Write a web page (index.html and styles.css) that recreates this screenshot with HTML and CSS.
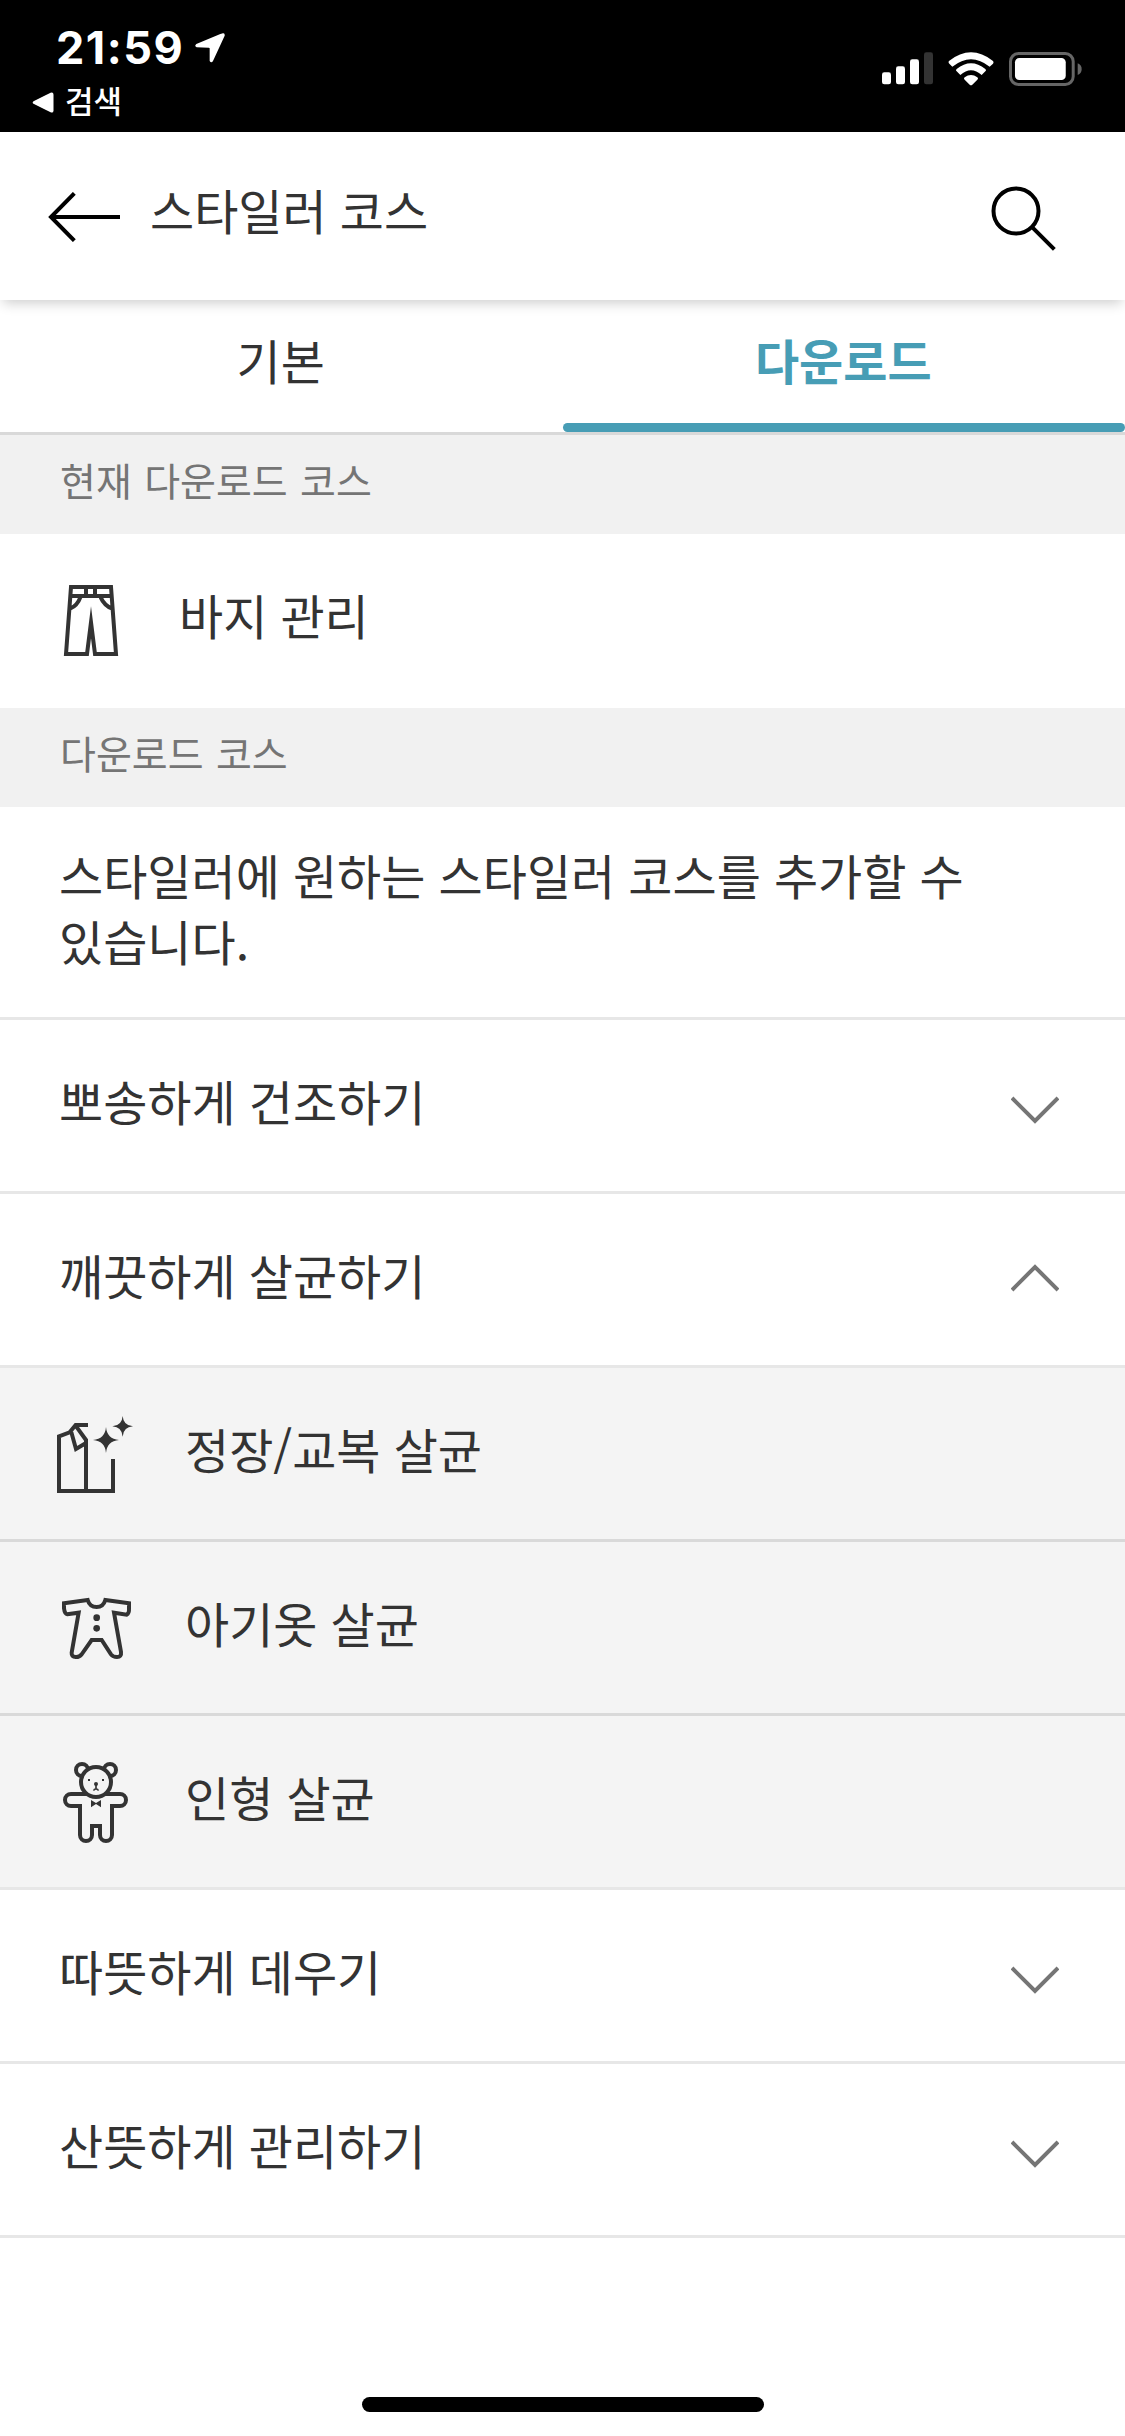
FILE: index.html
```html
<!DOCTYPE html>
<html lang="ko">
<head>
<meta charset="utf-8">
<title>스타일러 코스</title>
<link rel="stylesheet" href="styles.css">
</head>
<body>
<header class="status">
  <div class="status-left">
    <div class="clock"><span class="time">21:59</span>
      <svg class="location" viewBox="0 0 90 90"><path d="M84 1Q90 0 89 8L54 84Q49 92 44 84V46Q44 44 41 44L5 43Q-3 39 4 33L76 3Z"/></svg>
    </div>
    <div class="back-app">
      <svg class="back-mark" viewBox="0 0 66 64"><path d="M56 2Q65-1 65 8V56Q65 65 56 62L4 36Q-1 32 4 28Z"/></svg>
      <span>검색</span>
    </div>
  </div>
  <div class="status-right">
    <svg class="signal" viewBox="0 0 153 99"><rect y="61" width="27" height="36" rx="7"/><rect x="42" y="43" width="27" height="54" rx="7"/><rect x="84" y="22" width="27" height="75" rx="7"/><rect class="dim" x="126" y="1" width="27" height="96" rx="7"/></svg>
    <svg class="wifi" viewBox="0 0 138 102"><path d="M3 27Q0 31 4 35L13 44Q69-1 125 44L135 35Q138 31 135 27Q69-25 3 27ZM26 51Q22 55 26 58L37 69Q69 40 101 69L112 58Q116 55 112 51Q69 16 26 51ZM50 76Q46 80 50 83L65 98Q69 102 73 98L88 83Q92 80 88 76Q69 62 50 76Z"/></svg>
    <svg class="battery" viewBox="0 0 220 102"><rect class="shell" x="4.500" y="4.500" width="189" height="93" rx="24"/><rect x="18" y="18" width="153" height="66" rx="13"/><path class="cap" d="M207 34Q219 39 219 51Q219 64 207 69Z"/></svg>
  </div>
</header>

<nav class="topbar">
  <svg class="arrow" viewBox="0 0 216 150"><path d="M79 4L9 75L79 146M9 75H216"/></svg>
  <h1 class="title">스타일러 코스</h1>
  <svg class="search" viewBox="0 0 195 195"><circle cx="75" cy="75" r="67.500"/><path d="M124 124L190 190"/></svg>
</nav>

<div class="tabs">
  <div class="tab">기본</div>
  <div class="tab active">다운로드</div>
</div>

<main>
  <h2 class="section">현재 다운로드 코스</h2>
  <div class="row current">
    <svg class="icon pants" viewBox="0 0 180 222"><path d="M33 9H153L168 210H105L93 115L81 210H18ZM31 36H155M78 9V36M105 9V36M61 40Q52 65 30 74M122 40Q133 65 157 74"/></svg>
    <span>바지 관리</span>
  </div>
  <h2 class="section second">다운로드 코스</h2>
  <p class="intro">스타일러에 원하는 스타일러 코스를 추가할 수 있습니다.</p>

  <div class="row group"><span>뽀송하게 건조하기</span>
    <svg class="chevron" viewBox="0 0 144 84"><path d="M3 6L72 75L141 6"/></svg></div>
  <div class="row group"><span>깨끗하게 살균하기</span>
    <svg class="chevron up" viewBox="0 0 144 84"><path d="M3 78L72 9L141 78"/></svg></div>
  <div class="row item">
    <svg class="icon jacket" viewBox="0 0 234 240"><path d="M96 33H59L41 55L9 67V231H171V135M90 231V78L61 38M90 87L60 105L46 55"/><path class="solid" d="M150 39Q153 75 189 78Q153 81 150 117Q147 81 111 78Q147 75 150 39ZM200 6Q202 35 231 37Q202 39 200 68Q198 39 169 37Q198 35 200 6Z"/></svg>
    <span>정장/교복 살균</span>
  </div>
  <div class="row item">
    <svg class="icon baby" viewBox="0 0 234 195"><path d="M95 12L24 22V37Q26 54 34 55L68 50L47 170Q46 183 59 183Q69 184 77 175L107 132H137L165 175Q171 183 183 183Q197 183 195 168L174 50L212 56Q220 52 219 37V22L148 12Q142 33 122 33Q101 33 95 12Z"/><circle class="solid" cx="122" cy="65" r="10"/><circle class="solid" cx="122" cy="97" r="10"/></svg>
    <span>아기옷 살균</span>
  </div>
  <div class="row item last">
    <svg class="icon bear" viewBox="0 0 234 255"><circle cx="78" cy="30" r="18"/><circle cx="162" cy="30" r="18"/><path d="M100 102H45a18 18 0 0 0 0 36H72V225a18 18 0 0 0 36 0V198H132V225a18 18 0 0 0 36 0V138H192a18 18 0 0 0 0-36H140"/><circle class="face" cx="120" cy="66" r="45"/><path class="solid" d="M96 57h6v6h-6zM138 57h6v6h-6zM105 120L120 129L135 120V142L120 132L105 142Z"/><circle class="solid" cx="120" cy="72" r="6"/><path class="mouth" d="M120 72V87M113 92Q114 87 120 87Q126 87 127 92"/></svg>
    <span>인형 살균</span>
  </div>
  <div class="row group"><span>따뜻하게 데우기</span>
    <svg class="chevron" viewBox="0 0 144 84"><path d="M3 6L72 75L141 6"/></svg></div>
  <div class="row group"><span>산뜻하게 관리하기</span>
    <svg class="chevron" viewBox="0 0 144 84"><path d="M3 6L72 75L141 6"/></svg></div>
</main>
<footer class="home"><div class="home-bar"></div></footer>
</body>
</html>
```
FILE: styles.css
```css
* { box-sizing: border-box; }
body {
  margin: 0;
  width: 1125px;
  height: 2436px;
  display: flex;
  flex-direction: column;
  background: #fff;
  color: #333;
  font: 400 48px/66px "Noto Sans CJK KR", sans-serif;
  word-spacing: -.3px;
}
h1, h2, p { margin: 0; font-weight: 400; }
svg { display: block; flex: none; }

.status {
  height: 132px;
  display: flex;
  justify-content: space-between;
  background: #000;
  color: #fff;
  fill: #fff;
}
.status-left { padding: 20px 0 0 32px; }
.clock {
  height: 55px;
  padding-left: 24px;
  display: flex;
  align-items: center;
  gap: 11px;
}
.time { font: 700 45px/55px Inter, sans-serif; letter-spacing: 1.5px; }
.location { width: 30px; height: 30px; }
.back-app {
  display: flex;
  align-items: center;
  gap: 11px;
  font-size: 31px;
  font-weight: 500;
  line-height: 50px;
}
.back-mark { width: 22px; height: 21px; margin-top: 4px; }
.status-right {
  display: flex;
  align-items: flex-start;
  padding: 52px 43px 0 0;
}
.signal { width: 51px; height: 33px; margin-right: 15px; }
.signal .dim { fill: #333; }
.wifi { width: 46px; height: 34px; margin-right: 15px; }
.battery { width: 73px; height: 34px; }
.battery .shell { fill: none; stroke: #666; stroke-width: 9; }
.battery .cap { fill: #666; }

.topbar {
  position: relative;
  height: 168px;
  padding: 0 69px 0 48px;
  display: flex;
  align-items: center;
  background: #fff;
  box-shadow: 0 6px 12px -3px rgba(0, 0, 0, .2);
}
.topbar svg { fill: none; stroke: #000; stroke-width: 12; }
.topbar .arrow { width: 72px; height: 50px; margin-top: 2px; }
.title { flex: 1; padding: 0 0 15px 30px; font-size: 48px; }
.search { width: 65px; height: 65px; margin-top: 4px; }

.tabs {
  height: 135px;
  display: grid;
  grid-template-columns: 1fr 1fr;
  border-bottom: 3px solid #d9d9d9;
}
.tab { position: relative; padding: 26px 1px 0 0; text-align: center; }
.active { color: #479db5; font-weight: 700; }
.active::after {
  content: "";
  position: absolute;
  left: 0;
  right: 0;
  bottom: 0;
  height: 9px;
  border-radius: 5px;
  background: #479db5;
}

.section {
  height: 99px;
  padding: 11px 60px 0;
  background: #f1f1f1;
  color: #757575;
  font-size: 39px;
  word-spacing: 1.5px;
}
.row {
  height: 174px;
  padding: 0 64px 0 59px;
  display: flex;
  align-items: center;
  border-bottom: 3px solid #e7e7e7;
}
.row span { padding-bottom: 11px; }
.current { padding-left: 60px; border: 0; }
.current span { padding-bottom: 14px; }
.intro { height: 213px; padding: 34px 120px 0 59px; border-bottom: 3px solid #e7e7e7; }
.group { justify-content: space-between; }
.chevron { width: 48px; height: 28px; margin: 9px 2px 0 0; fill: none; stroke: #757575; stroke-width: 12; }
.up { margin-top: -4px; }

.item { padding-left: 56px; background: #f4f4f4; border-color: #d9d9d9; }
.last { border-color: #e7e7e7; }
.icon { fill: none; stroke: #333; stroke-width: 12; stroke-miterlimit: 12; }
.icon .solid { fill: #333; stroke: none; }
.pants { width: 60px; height: 74px; margin-right: 59px; }
.jacket { width: 78px; height: 80px; margin-right: 51px; }
.baby { width: 78px; height: 65px; margin: 2px 51px 0 0; }
.bear { width: 78px; height: 85px; margin: 2px 51px 0 0; }
.bear .face { fill: #f4f4f4; }
.bear .mouth { stroke-width: 5; }

.home {
  flex: 1;
  display: flex;
  justify-content: center;
  align-items: flex-end;
  padding-bottom: 24px;
}
.home-bar { width: 402px; height: 15px; border-radius: 8px; background: #000; }
```
